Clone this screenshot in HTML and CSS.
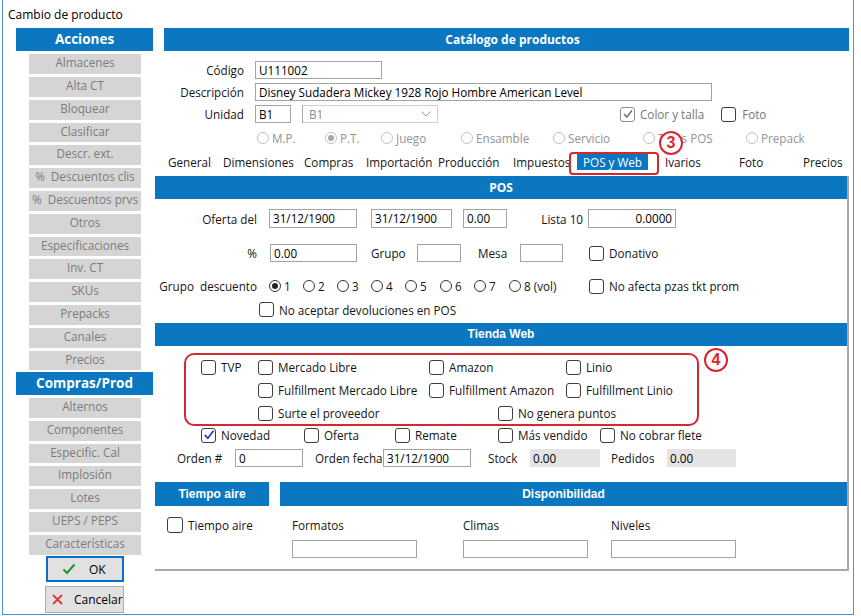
FILE: index.html
```html
<!DOCTYPE html>
<html lang="es">
<head>
<meta charset="utf-8">
<title>Cambio de producto</title>
<link rel="stylesheet" href="styles.css">
</head>
<body>
<div class="window">
  <div class="title">Cambio de producto</div>
  <div class="content">
    <aside class="side">
      <div class="side-head">Acciones</div>
      <div class="side-btns first">
        <div class="sbtn">Almacenes</div>
        <div class="sbtn">Alta CT</div>
        <div class="sbtn">Bloquear</div>
        <div class="sbtn">Clasificar</div>
        <div class="sbtn">Descr. ext.</div>
        <div class="sbtn">%&nbsp; Descuentos clis</div>
        <div class="sbtn">%&nbsp; Descuentos prvs</div>
        <div class="sbtn">Otros</div>
        <div class="sbtn">Especificaciones</div>
        <div class="sbtn">Inv. CT</div>
        <div class="sbtn">SKUs</div>
        <div class="sbtn">Prepacks</div>
        <div class="sbtn">Canales</div>
        <div class="sbtn">Precios</div>
      </div>
      <div class="side-head">Compras/Prod</div>
      <div class="side-btns">
        <div class="sbtn">Alternos</div>
        <div class="sbtn">Componentes</div>
        <div class="sbtn">Especific. Cal</div>
        <div class="sbtn">Implosión</div>
        <div class="sbtn">Lotes</div>
        <div class="sbtn">UEPS / PEPS</div>
        <div class="sbtn">Características</div>
      </div>
      <div class="dlg-btns">
        <div class="dbtn ok">
          <svg class="ico-ok" width="14" height="12" viewBox="0 0 14 12"><path d="M1.5 6.5 L5 10 L12.5 1.5" fill="none" stroke="#1f9a2a" stroke-width="2.2"/></svg>
          <span>OK</span>
        </div>
        <div class="dbtn cancel">
          <svg class="ico-x" width="11" height="11" viewBox="0 0 11 11"><path d="M1 1 L10 10 M10 1 L1 10" fill="none" stroke="#e03a35" stroke-width="1.8"/></svg>
          <span>Cancelar</span>
        </div>
      </div>
    </aside>

    <main class="main">
      <div class="cat-head">Catálogo de productos</div>
      <div class="form">
        <div class="frow">
          <span class="flabel">Código</span>
          <span class="inp w-cod">U111002</span>
        </div>
        <div class="frow">
          <span class="flabel">Descripción</span>
          <span class="inp w-desc">Disney Sudadera Mickey 1928 Rojo Hombre American Level</span>
        </div>
        <div class="frow">
          <span class="flabel">Unidad</span>
          <span class="inp w-uni">B1</span>
          <span class="combo">B1
            <svg class="chev" width="10" height="6" viewBox="0 0 10 6"><path d="M0.5 0.5 L5 5 L9.5 0.5" fill="none" stroke="#9a9a9a" stroke-width="1"/></svg>
          </span>
          <span class="chk dis colortalla"><span class="cb cb-dis"><svg width="12" height="12" viewBox="0 0 12 12"><path d="M2 6 L4.8 9 L10 2.5" fill="none" stroke="#6f6f6f" stroke-width="1.5"/></svg></span>Color y talla</span>
          <span class="chk dis foto"><span class="cb"></span>Foto</span>
        </div>
        <div class="radrow">
          <span class="rad dis"><span class="rd rd-dis"></span>M.P.</span>
          <span class="rad dis"><span class="rd rd-dis on"></span>P.T.</span>
          <span class="rad dis"><span class="rd rd-dis"></span>Juego</span>
          <span class="rad dis"><span class="rd rd-dis"></span>Ensamble</span>
          <span class="rad dis"><span class="rd rd-dis"></span>Servicio</span>
          <span class="rad dis"><span class="rd rd-dis"></span>Tipos POS</span>
          <span class="rad dis"><span class="rd rd-dis"></span>Prepack</span>
        </div>
      </div>
      <div class="tabs">
        <span>General</span>
        <span>Dimensiones</span>
        <span>Compras</span>
        <span>Importación</span>
        <span>Producción</span>
        <span>Impuestos</span>
        <span><span class="tab-sel">POS y Web</span></span>
        <span>Ivarios</span>
        <span>Foto</span>
        <span>Precios</span>
      </div>

      <div class="panel">
        <div class="sec-head">POS</div>
        <div class="pos-r1">
          <span class="plabel">Oferta del</span>
          <span class="inp w88 ml12">31/12/1900</span>
          <span class="inp w81 ml14">31/12/1900</span>
          <span class="inp w44 ml11">0.00</span>
          <span class="lbl-lista">Lista 10</span>
          <span class="inp w88 ml5 right">0.0000</span>
        </div>
        <div class="pos-r2">
          <span class="plabel">%</span>
          <span class="inp w87 ml13">0.00</span>
          <span class="lbl-grupo">Grupo</span>
          <span class="inp w44"></span>
          <span class="lbl-mesa">Mesa</span>
          <span class="inp w43"></span>
          <span class="chk ml26"><span class="cb"></span>Donativo</span>
        </div>
        <div class="pos-r3">
          <span class="plabel">Grupo&nbsp; descuento</span>
          <div class="grp-radios">
            <span class="rad"><span class="rd on"></span>1</span>
            <span class="rad"><span class="rd"></span>2</span>
            <span class="rad"><span class="rd"></span>3</span>
            <span class="rad"><span class="rd"></span>4</span>
            <span class="rad"><span class="rd"></span>5</span>
            <span class="rad"><span class="rd"></span>6</span>
            <span class="rad"><span class="rd"></span>7</span>
            <span class="rad"><span class="rd"></span>8 (vol)</span>
            <span class="chk"><span class="cb"></span>No afecta pzas tkt prom</span>
          </div>
        </div>
        <div class="pos-r4">
          <span class="chk"><span class="cb"></span>No aceptar devoluciones en POS</span>
        </div>

        <div class="sec-head arial web-head">Tienda Web</div>
        <div class="web-r1">
          <span class="chk"><span class="cb"></span>TVP</span>
          <span class="chk"><span class="cb"></span>Mercado Libre</span>
          <span class="chk"><span class="cb"></span>Amazon</span>
          <span class="chk"><span class="cb"></span>Linio</span>
        </div>
        <div class="web-r2">
          <span class="chk"><span class="cb"></span><span class="clip clip-ml">Fulfillment Mercado Libre</span></span>
          <span class="chk"><span class="cb"></span><span class="clip clip-am">Fulfillment Amazon</span></span>
          <span class="chk"><span class="cb"></span>Fulfillment Linio</span>
        </div>
        <div class="web-r3">
          <span class="chk"><span class="cb"></span>Surte el proveedor</span>
          <span class="chk"><span class="cb"></span>No genera puntos</span>
        </div>
        <div class="web-r4">
          <span class="chk"><span class="cb"><svg width="12" height="12" viewBox="0 0 12 12"><path d="M1.8 6 L4.8 9.2 L10.5 1.8" fill="none" stroke="#1d3ad6" stroke-width="1.8"/></svg></span>Novedad</span>
          <span class="chk"><span class="cb"></span>Oferta</span>
          <span class="chk"><span class="cb"></span>Remate</span>
          <span class="chk"><span class="cb"></span>Más vendido</span>
          <span class="chk"><span class="cb"></span>No cobrar flete</span>
        </div>
        <div class="web-r5">
          <span class="lbl-orden">Orden #</span>
          <span class="inp w68">0</span>
          <span class="lbl-ofecha">Orden fecha</span>
          <span class="inp w88">31/12/1900</span>
          <span class="lbl-stock">Stock</span>
          <span class="inp ro w70">0.00</span>
          <span class="lbl-ped">Pedidos</span>
          <span class="inp ro w69">0.00</span>
        </div>

        <div class="bottom">
          <div class="ta-block">
            <div class="sec-head arial">Tiempo aire</div>
            <div class="ta-body">
              <span class="chk"><span class="cb"></span>Tiempo aire</span>
            </div>
          </div>
          <div class="disp-block">
            <div class="sec-head arial">Disponibilidad</div>
            <div class="disp-body">
              <div class="dcol"><span class="dlabel">Formatos</span><span class="inp w125"></span></div>
              <div class="dcol"><span class="dlabel">Climas</span><span class="inp w125"></span></div>
              <div class="dcol"><span class="dlabel">Niveles</span><span class="inp w125"></span></div>
            </div>
          </div>
        </div>
      </div>
    </main>
  </div>

  <div class="ann-box ann-tab"></div>
  <div class="ann-num ann-3">3</div>
  <div class="ann-box ann-web"></div>
  <div class="ann-num ann-4">4</div>
</div>
</body>
</html>
```

FILE: styles.css
```css
* { box-sizing: border-box; }

body {
  margin: 0;
  background: #fff;
  font-family: "Open Sans", "Noto Sans", sans-serif;
  font-size: 11.7px;
  color: #151515;
}

.window {
  position: relative;
  margin-left: 2px;
  width: 852px;
  height: 615px;
  border-left: 1px solid #4d95d8;
  border-right: 1px solid #4d95d8;
  border-bottom: 1px solid #4d95d8;
  background: #fff;
}

.title {
  height: 28px;
  padding-left: 5px;
  line-height: 30px;
  font-size: 12px;
  color: #000;
}

.content {
  display: flex;
}

/* ---------- sidebar ---------- */
.side {
  margin-left: 13px;
  width: 137px;
  flex: none;
}

.side-head {
  height: 23px;
  background: #0b77c0;
  color: #fff;
  font-weight: 700;
  font-size: 13.5px;
  line-height: 23px;
  text-align: center;
}

.side-btns {
  display: grid;
  grid-auto-rows: 19.8px;
  row-gap: 3px;
  padding: 3.2px 0 1.4px 13px;
}

.sbtn {
  width: 112px;
  background: #d5d5d5;
  color: #7c7c7c;
  text-align: center;
  line-height: 17px;
  white-space: nowrap;
}

.dlg-btns {
  padding-top: 0.6px;
}

.dbtn {
  display: flex;
  align-items: center;
  background: #e1e1e1;
  color: #000;
  font-size: 12px;
}

.dbtn.ok {
  margin-left: 30px;
  width: 78px;
  height: 26px;
  border: 2px solid #0a6fcc;
  padding-left: 14px;
}

.dbtn.ok span { margin-left: 13px; }

.dbtn.cancel {
  margin-left: 29px;
  margin-top: 3.5px;
  width: 79px;
  height: 27px;
  border: 1px solid #adadad;
  padding-left: 6px;
}

.dbtn.cancel span { margin-left: 11px; }

/* ---------- main ---------- */
.main {
  margin-left: 2px;
  width: 694px;
  flex: none;
}

.cat-head {
  margin-left: 9px;
  width: 685px;
  height: 23px;
  background: #0b77c0;
  color: #fff;
  font-weight: 700;
  font-size: 12px;
  line-height: 23px;
  text-align: center;
  padding-left: 12px;
}

.form {
  padding-top: 10px;
}

.frow {
  display: flex;
  align-items: center;
  height: 18px;
  margin-bottom: 4px;
}

.flabel {
  width: 89px;
  text-align: right;
  margin-right: 11px;
  flex: none;
}

.inp {
  display: inline-block;
  height: 18px;
  border: 1px solid #a3a3a3;
  background: #fff;
  padding-left: 3px;
  line-height: 16px;
  white-space: nowrap;
  overflow: hidden;
  flex: none;
  color: #000;
}

.inp.right { text-align: right; padding-right: 3px; }
.inp.ro { background: #e4e4e4; border-color: #e4e4e4; padding-left: 2px; }

.w-cod { width: 127px; }
.w-desc { width: 457px; }
.w-uni { width: 36px; }

.combo {
  position: relative;
  margin-left: 11px;
  width: 136px;
  height: 18px;
  border: 1px solid #cfcfcf;
  border-left-color: #a8a8a8;
  color: #8a8a8a;
  padding-left: 6px;
  line-height: 16px;
  flex: none;
}

.chev {
  position: absolute;
  right: 6px;
  top: 5px;
}

.chk {
  display: flex;
  align-items: center;
  white-space: nowrap;
}

.cb {
  width: 15px;
  height: 15px;
  border: 1.5px solid #3e3e3e;
  border-radius: 3px;
  background: #fff;
  margin-right: 5px;
  flex: none;
  display: flex;
  align-items: center;
  justify-content: center;
}

.cb-dis { border-color: #8c8c8c; }

.chk.dis { color: #777; }
.colortalla { margin-left: 182px; }
.foto { margin-left: 17px; }
.foto .cb { margin-right: 6px; }

.radrow {
  display: grid;
  grid-template-columns: 68px 56px 80px 92px 90px 103px auto;
  height: 14px;
  align-items: center;
  margin-top: 7px;
  padding-left: 102px;
}

.rad {
  display: flex;
  align-items: center;
  white-space: nowrap;
}

.rad.dis { color: #939393; }

.rd {
  position: relative;
  width: 12px;
  height: 12px;
  border: 1px solid #333;
  border-radius: 50%;
  margin-right: 3px;
  flex: none;
  background: #fff;
}

.rd.on::after {
  content: "";
  position: absolute;
  left: 2px;
  top: 2px;
  width: 6px;
  height: 6px;
  border-radius: 50%;
  background: #222;
}

.rd-dis { border-color: #c2c2c2; }
.rd-dis.on::after { background: #a8a8a8; }

.tabs {
  display: grid;
  grid-template-columns: 55px 81px 62px 72px 75px 64px 88px 74px 64px auto;
  height: 16px;
  margin-top: 10px;
  padding-left: 13px;
  line-height: 16px;
  white-space: nowrap;
}

.tab-sel {
  display: inline-block;
  width: 71px;
  background: #0b77c0;
  color: #fff;
  text-align: center;
}

/* ---------- panel ---------- */
.panel {
  margin-top: 6px;
  width: 694px;
  height: 395px;
  border-right: 2px solid #a9a9a9;
  border-bottom: 2px solid #a9a9a9;
}

.sec-head {
  height: 23px;
  background: #0b77c0;
  color: #fff;
  font-weight: 700;
  font-size: 12px;
  line-height: 23px;
  text-align: center;
}

.sec-head.arial {
  font-family: "Liberation Sans", Arial, sans-serif;
  font-size: 12px;
}

.pos-r1, .pos-r2, .pos-r3, .pos-r4,
.web-r5 {
  display: flex;
  align-items: center;
}

.pos-r1 { margin-top: 10px; height: 19px; }
.pos-r1 .inp { height: 19px; line-height: 17px; }
.pos-r2 { margin-top: 16px; height: 18px; }
.pos-r3 { margin-top: 17px; height: 14px; }
.pos-r4 { margin-top: 9px; height: 15px; padding-left: 104px; }

.plabel {
  width: 102px;
  text-align: right;
  flex: none;
  white-space: nowrap;
}

.w43 { width: 43px; }
.w44 { width: 44px; }
.w68 { width: 68px; }
.w69 { width: 69px; }
.w70 { width: 70px; }
.w81 { width: 81px; }
.w87 { width: 87px; }
.w88 { width: 88px; }
.w125 { width: 125px; }

.ml5 { margin-left: 5px; }
.ml11 { margin-left: 11px; }
.ml12 { margin-left: 12px; }
.ml13 { margin-left: 13px; }
.ml14 { margin-left: 14px; }
.ml26 { margin-left: 26px; }

.lbl-lista { width: 76px; text-align: right; flex: none; }
.lbl-grupo { margin-left: 14px; width: 46px; flex: none; }
.lbl-mesa { margin-left: 17px; width: 42px; flex: none; }

.grp-radios {
  display: grid;
  grid-template-columns: 34px 34px 34px 34px 35px 34px 35px 80px auto;
  align-items: center;
  margin-left: 12px;
}

.web-head { margin-top: 6px; }

.web-r1, .web-r2, .web-r3, .web-r4 {
  display: grid;
  align-items: center;
  height: 15px;
}

.web-r1 { margin-top: 13px; padding-left: 46px; grid-template-columns: 57px 171px 137px auto; }
.web-r2 { margin-top: 8px; padding-left: 103px; grid-template-columns: 171px 137px auto; }
.web-r3 { margin-top: 8px; padding-left: 103px; grid-template-columns: 240px auto; }
.web-r4 { margin-top: 7px; padding-left: 46px; grid-template-columns: 103px 91px 103px 102px auto; }

.clip { overflow: hidden; white-space: nowrap; display: inline-block; }
.clip-ml { width: 140px; }
.clip-am { width: 105px; }

.web-r5 { margin-top: 7px; height: 18px; padding-left: 22px; }
.lbl-orden { width: 58px; flex: none; }
.lbl-ofecha { margin-left: 12px; width: 68px; flex: none; white-space: nowrap; overflow: hidden; }
.lbl-stock { margin-left: 17px; width: 42px; flex: none; }
.lbl-ped { margin-left: 11px; width: 56px; flex: none; }

.bottom {
  display: flex;
  margin-top: 15px;
}

.bottom .sec-head { height: 24px; line-height: 24px; }

.ta-block { width: 114px; flex: none; }
.ta-body { padding: 11px 0 0 12px; }
.ta-body .chk { height: 16px; }
.ta-body .cb { width: 16px; height: 16px; }

.disp-block { margin-left: 11px; width: 567px; flex: none; }
.disp-body {
  display: grid;
  grid-template-columns: 171px 148px auto;
  padding: 11px 0 0 12px;
}

.dcol { display: flex; flex-direction: column; align-items: flex-start; }
.dlabel { height: 16px; line-height: 16px; }
.dcol .inp { margin-top: 7px; }

/* ---------- annotations ---------- */
.ann-box {
  position: absolute;
  border: 2px solid #d8262e;
}

.ann-tab {
  left: 566px;
  top: 152px;
  width: 90px;
  height: 23px;
  border-radius: 4px;
}

.ann-web {
  left: 181px;
  top: 353px;
  width: 515px;
  height: 73px;
  border-radius: 10px;
}

.ann-num {
  position: absolute;
  width: 24px;
  height: 24px;
  border: 2px solid #d8262e;
  border-radius: 50%;
  background: #fff;
  color: #d8262e;
  font-family: "Liberation Sans", Arial, sans-serif;
  font-weight: 700;
  font-size: 16px;
  line-height: 20px;
  text-align: center;
}

.ann-3 { left: 656px; top: 131px; }
.ann-4 { left: 701px; top: 348px; }
```
